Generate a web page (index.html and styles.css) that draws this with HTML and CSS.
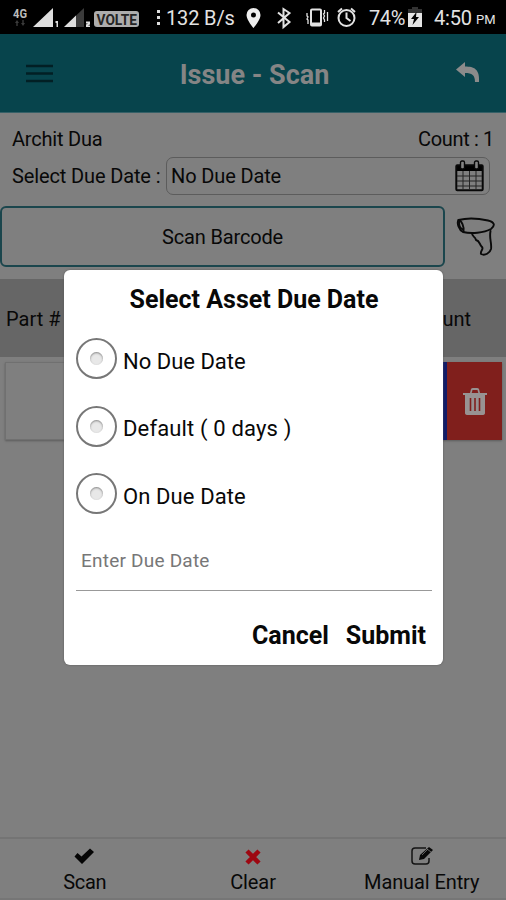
FILE: index.html
```html
<!DOCTYPE html>
<html lang="en">
<head>
<meta charset="utf-8">
<title>Issue - Scan</title>
<link rel="stylesheet" href="styles.css">
</head>
<body>
<div class="screen">
  <div class="status">
    <svg class="signals" width="142" height="34" viewBox="0 0 142 34">
      <g fill="#3b3b3b"><path d="M17 20l2 3h-1.300v3h-1.400v-3H15zM23 26l2-3h-1.300v-3h-1.400v3H21z"/><path d="M84 8v19H64z"/></g>
      <g fill="#dedede"><path d="M53 8v19H33zM76 15.500V27H64zM55.500 21h2.500v6h-1.500v-4h-1zM86 21.500h4v3l-2 1h2V27h-4v-2.500l2-1h-2z"/></g>
      <rect x="94" y="11" width="45" height="16" rx="3" fill="#adadad"/>
      <text class="net" x="13" y="18" textLength="14" lengthAdjust="spacingAndGlyphs">4G</text>
      <text class="volte" x="96.500" y="24.500" textLength="40.500" lengthAdjust="spacingAndGlyphs">VOLTE</text>
    </svg>
    <span class="dots"><i></i><i></i><i></i></span>
    <span class="speed">132 B/s</span>
    <svg class="sys" width="118" height="34" viewBox="0 0 118 34">
      <path d="M13.500 8a7 7 0 0 0-7 7c0 5 7 13 7 13s7-8 7-13a7 7 0 0 0-7-7zm0 4.500a2.500 2.500 0 1 1 0 5 2.500 2.500 0 0 1 0-5z" fill="#eee"/>
      <g fill="none" stroke="#e3e3e3" stroke-width="2">
        <path d="M38 12.500l11.500 9.500-6 5V9l6 4-11.500 10"/>
        <rect x="71" y="9.500" width="10" height="16" rx="1"/><path d="M71 24h10" stroke-width="3"/>
        <path d="M67 13v3l1 1-1 2 1 1v4M84.500 10v3l-1 1 1 2-1 2 1 2v2M87.500 12v9" stroke-width="1.300"/>
        <circle cx="106.500" cy="18" r="8"/><path d="M106.500 12.500V18l4 3M98 12l4-3.500M115 12l-4-3.500"/>
      </g>
    </svg>
    <span class="percent">74%</span>
    <svg class="battery" width="14" height="20" viewBox="0 0 14 20"><path d="M4 0h6v2h4v4H0V2h4z" fill="#333"/><path d="M0 6h14v14H0z" fill="#e5e5e5"/><path d="M8.500 5L3 12h3l-1.500 6L11 10H8z"/></svg>
    <span class="clock">4:50</span><span class="pm">PM</span>
  </div>
  <header class="bar">
    <svg class="menu" width="27" height="19" viewBox="0 0 27 19"><path d="M0 2h27M0 9.500h27M0 17h27" stroke="#021f24" stroke-width="2.700"/></svg>
    <h1><span class="fit title">Issue - Scan</span></h1>
    <svg class="back" width="24" height="21" viewBox="0 0 24 21"><path d="M0 7.500L9 0v4.500c9 0 15 2.500 14 15.500h-4c0-7-3-9-10-9V15z" fill="#8b8b8b"/></svg>
  </header>
  <main>
    <div class="row person"><span class="fit t-name">Archit Dua</span><span class="fit t-count">Count : 1</span></div>
    <div class="row due">
      <span class="fit t-select">Select Due Date :</span>
      <div class="field"><span class="fit t-nodue">No Due Date</span>
        <svg width="29" height="32" viewBox="0 0 29 32"><path d="M1 5h27v6H1z"/><rect x="1.300" y="5.300" width="26.400" height="25" rx="1" fill="none" stroke="#080808" stroke-width="2"/><path d="M8 11v19M14.500 11v19M21 11v19M2 16h25M2 21h25M2 26h25" stroke="#252525" stroke-width="1"/><g fill="#858585" stroke="#080808" stroke-width="1.400"><rect x="5.500" y="1" width="4" height="8" rx="1.500"/><rect x="19.500" y="1" width="4" height="8" rx="1.500"/></g></svg>
      </div>
    </div>
    <div class="scanrow">
      <div class="scan"><span class="fit t-barcode">Scan Barcode</span></div>
      <svg width="42" height="42" viewBox="0 0 42 42"><g fill="none" stroke="#0a0a0a" stroke-width="1.900" stroke-linejoin="round" stroke-linecap="round"><path d="M3.500 4C1.500 7 4 14 8 16c8 2 21 1 28-3 5-4 3-7-3-8.500C22 2 11 2 3.500 4"/><path d="M3.500 4c3 0 6 7 5 12M4 6c0 3 1 6 3 7"/><path d="M17 17c0 4 3 3 4 7 4 1 3 4 6 7 2 2-2 4-1 7 4 2 9-1 10-5 1-6-2-10-.5-18"/></g></svg>
    </div>
    <div class="thead"><span class="fit t-part">Part #</span><span class="fit t-amount">Amount</span></div>
    <div class="item"><div class="blue"></div><div class="delete">
      <svg width="26" height="29" viewBox="0 0 26 29"><path d="M1 6h7l1-4q.5-1 2-1h4q1.500 0 2 1l1 4h7v2h-2v18q0 2-3 2H6q-3 0-3-2V8H1z" fill="#989292"/><path d="M10.500 3h5l.8 3H9.700z" fill="#801f1c"/><path d="M8.500 11v13M13 11v13M17.500 11v13" stroke="#801f1c" stroke-width="1.600"/></svg>
    </div></div>
  </main>
  <footer>
    <div class="tab"><svg width="22" height="20" viewBox="0 0 22 20"><path d="M1.500 10.500l3-3.500 4 3.500 8.500-8L21 6 9 18z" fill="#050505"/></svg><span class="fit t-scan">Scan</span></div>
    <div class="tab"><svg width="22" height="20" viewBox="0 0 22 20"><path d="M5 5l12 12M17 5L5 17" stroke="#9d0711" stroke-width="4.500"/></svg><span class="fit t-clear">Clear</span></div>
    <div class="tab"><svg width="24" height="20" viewBox="0 0 24 20"><path d="M16 2H5Q2 2 2 5v10q0 3 3 3h11q3 0 3-3v-3" fill="none" stroke="#151515" stroke-width="1.500"/><path d="M9 14l1-5 9-8 4 3-9 9z" fill="#080808"/><path d="M12 9l6-6M17 3l4 3" stroke="#777" stroke-width=".8"/></svg><span class="fit t-manual">Manual Entry</span></div>
  </footer>
  <section class="dialog">
    <h2><span class="fit t-asset">Select Asset Due Date</span></h2>
    <div class="option"><span class="radio"></span><span class="fit o1">No Due Date</span></div>
    <div class="option"><span class="radio"></span><span class="fit o2">Default ( 0 days )</span></div>
    <div class="option"><span class="radio"></span><span class="fit o3">On Due Date</span></div>
    <div class="entry"><span class="fit t-enter">Enter Due Date</span></div>
    <div class="actions"><span class="fit t-cancel">Cancel</span><span class="fit t-submit">Submit</span></div>
  </section>
</div>
</body>
</html>
```
FILE: styles.css
```css
* { box-sizing: border-box; }
body { margin: 0; font-family: Roboto, sans-serif; color: #080808; }
.screen { position: relative; width: 506px; height: 900px; background: #7f7f7f; display: flex; flex-direction: column; overflow: hidden; font-size: 20px; }
svg { flex: none; display: block; }
.fit { white-space: nowrap; }
.t-name { letter-spacing: -.2px; }
.t-count { letter-spacing: -.35px; }
.t-select, .t-nodue { letter-spacing: -.13px; }
.t-barcode { letter-spacing: -.15px; }
.t-asset { letter-spacing: 0; }
.t-scan { letter-spacing: -.3px; padding-left: 1px; }
.t-clear, .t-manual { letter-spacing: -.1px; }
.t-enter { letter-spacing: .22px; }
.o2 { letter-spacing: .15px; }
.o3 { letter-spacing: .1px; }
.status { height: 34px; background: #000; color: #e3e3e3; display: flex; align-items: center; flex: none; overflow: hidden; white-space: nowrap; }
.net { font: 700 12px Roboto, sans-serif; fill: #bbb; }
.volte { font: 700 15px Roboto, sans-serif; fill: #252525; }
.dots { width: 4px; margin-left: 15px; display: flex; flex-direction: column; gap: 3px; }
.dots i { width: 3px; height: 3px; background: #ddd; }
.speed { width: 79px; margin-left: 5px; padding-top: 1px; font-size: 20px; letter-spacing: -.15px; }
.sys { width: 118px; margin-left: -5px; }
.percent { margin-left: 11px; padding-top: 1px; width: 39px; font-size: 20px; letter-spacing: -.4px; }
.clock { margin-left: 12px; padding-top: 1px; font-size: 20px; width: 40px; letter-spacing: -.2px; }
.pm { font-size: 13px; margin: 5px 0 0 2px; }
.bar { height: 79px; flex: none; background: #07444c; border-bottom: 1px solid #356067; display: flex; align-items: center; padding: 0 26px; }
.bar h1 { flex: 1; margin: 3px 0 0; font-size: 27px; font-weight: 700; color: #858585; text-align: center; }
.back { margin-top: -1px; }
main { flex: 1; }
.row { display: flex; justify-content: space-between; align-items: center; padding: 0 12px; }
.person { height: 48px; padding-top: 4px; }
.due { height: 30px; padding-right: 16px; }
.field { width: 324px; height: 38px; border: 1px solid #5c5c5c; border-radius: 7px; display: flex; align-items: center; justify-content: space-between; padding: 0 5px 0 4px; }
.scanrow { display: flex; height: 61px; margin-top: 15px; align-items: center; gap: 10px; }
.scan { width: 445px; height: 61px; border: 2px solid #1b464d; border-radius: 6px; display: flex; align-items: center; justify-content: center; }
.thead { height: 78px; margin-top: 12px; background: #666; display: flex; align-items: center; justify-content: space-between; padding: 1px 35px 0 6px; }
.item { height: 78px; margin: 5px 4px 0 5px; border: 1px solid #707070; box-shadow: 0 1px 2px #5b5b5b; display: flex; justify-content: flex-end; }
.blue { width: 10px; background: #111b68; margin: -1px 0; }
.delete { width: 55px; margin: -1px -1px -1px 0; background: #801f1c; display: flex; align-items: center; justify-content: center; }
footer { height: 63px; border-top: 2px solid #747474; display: flex; flex: none; border-bottom: 2px solid #767676; }
.tab { width: 169px; display: flex; flex-direction: column; align-items: center; padding-top: 7px; gap: 4px; }
.dialog { position: absolute; left: 64px; top: 270px; width: 379px; height: 395px; background: #fff; border-radius: 6px; box-shadow: 0 0 2px #555; padding: 0 11px 0 12px; }
.dialog h2 { height: 55px; line-height: 60px; font-size: 25px; font-weight: 700; margin: 0; text-align: center; }
.option { display: flex; align-items: center; height: 67.500px; gap: 6px; font-size: 22px; }
.option .fit { padding-top: 5px; }
.radio { width: 41px; height: 41px; border: 2px solid #777; border-radius: 50%; display: flex; align-items: center; justify-content: center; }
.radio::after { content: ""; width: 13px; height: 13px; border-radius: 50%; background: #e8e8e8; box-shadow: inset 0 1px 2px #888; }
.entry { height: 63px; border-bottom: 1.500px solid #999; padding: 21px 0 0 5px; color: #777; font-size: 19px; }
.actions { display: flex; justify-content: flex-end; gap: 17px; padding: 29px 6px 0 0; font-size: 25px; font-weight: 700; line-height: 32px; }
```
